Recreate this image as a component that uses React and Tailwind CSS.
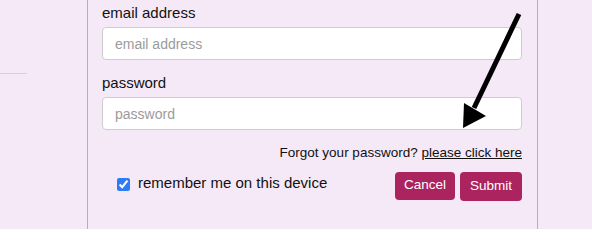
import React from "react";

const LoginPanel = () => {
  return (
    <div className="relative w-[592px] h-[229px] overflow-hidden bg-[#f5e9f7] font-['Liberation_Sans',Arial,sans-serif] text-[#111]">
      <div className="flex h-full">
        <div className="w-[87px] shrink-0">
          <div className="mt-[73px] w-[27px] h-px bg-[#d8cfdb]" />
        </div>

        <div className="w-[451px] shrink-0 h-full border-x border-[#b5adb8] pl-[14px] pr-[15px]">
          <label className="block pt-[4px] mb-[6px] text-[15px] leading-[17px]">
            email address
          </label>
          <input
            type="text"
            placeholder="email address"
            className="block w-full h-[33px] px-[12px] bg-white border border-[#cfcbd1] rounded-[4px] text-[14px] placeholder:text-[#9b9b9b] outline-none"
          />

          <label className="block mt-[14px] mb-[6px] text-[15px] leading-[17px]">
            password
          </label>
          <input
            type="password"
            placeholder="password"
            className="block w-full h-[33px] px-[12px] bg-white border border-[#cfcbd1] rounded-[4px] text-[14px] placeholder:text-[#9b9b9b] outline-none"
          />

          <p className="mt-[15px] text-right text-[13.5px] leading-[15.5px]">
            Forgot your password?{" "}
            <a href="#" className="underline">
              please click here
            </a>
          </p>

          <div className="mt-[11px] flex items-start justify-between">
            <label className="flex items-start pt-[2px] pl-[15px]">
              <input
                type="checkbox"
                defaultChecked
                className="mt-[4px] w-[13px] h-[13px] accent-[#2f7bf5]"
              />
              <span className="ml-[8px] text-[15px] leading-[17px]">
                remember me on this device
              </span>
            </label>
            <div className="flex gap-[5px]">
              <button className="h-[28px] px-[9px] rounded-[4px] bg-[#ab245f] text-white text-[13.5px]">
                Cancel
              </button>
              <button className="h-[29px] px-[10px] rounded-[4px] bg-[#ab245f] text-white text-[13.5px]">
                Submit
              </button>
            </div>
          </div>
        </div>
      </div>

      <svg
        className="absolute inset-0 pointer-events-none"
        width="592"
        height="229"
        viewBox="0 0 592 229"
      >
        <line x1="519" y1="14" x2="474" y2="108" stroke="#000" strokeWidth="5" />
        <polygon points="463,128 464,103 486,116" fill="#000" />
      </svg>
    </div>
  );
};

export default LoginPanel;
